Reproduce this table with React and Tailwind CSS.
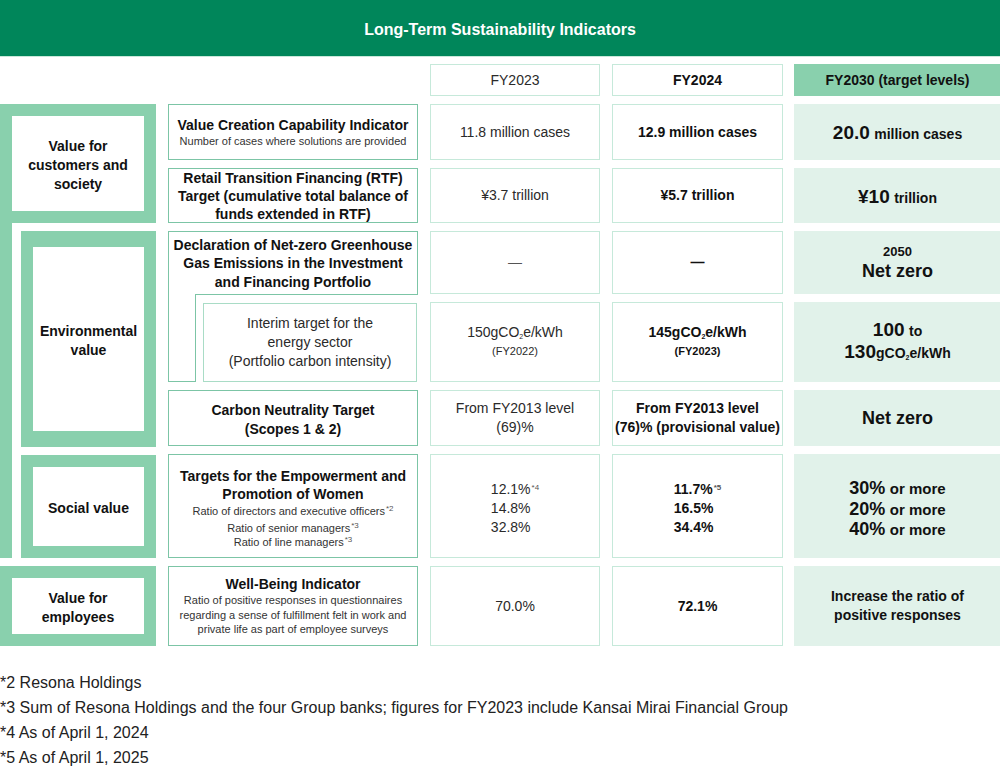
import React from "react";

const Cell = ({ children, bold }) => (
    <div className={"flex flex-col items-center justify-center border border-[#c6e9da] bg-white text-center text-[14px] leading-[19px] " + (bold ? "font-bold text-[#111]" : "text-[#2a2a2a]")}>
        {children}
    </div>
);

const Goal = ({ children }) => (
    <div className="flex flex-col items-center justify-center bg-[#e1f2ea] text-center font-bold text-[#111]">
        {children}
    </div>
);

const Ind = ({ children, className = "" }) => (
    <div className={"flex flex-col items-center justify-center border border-[#7cc5a6] bg-white text-center text-[#111] " + className}>
        {children}
    </div>
);

const Label = ({ children }) => (
    <div className="flex h-full w-full items-center justify-center bg-white pt-1 text-center text-[14px] font-bold leading-[19px] text-[#111]">
        {children}
    </div>
);

const Sup = ({ children }) => <sup className="ml-px text-[8px] text-[#555]">{children}</sup>;

const Co2 = () => <>gCO<sub className="text-[7px]">2</sub>e/kWh</>;

// one "30% or more" line in the target column
const Pct = ({ v }) => (
    <div className="h-[20.5px] leading-[20.5px]">
        <span className="text-[18px] leading-[20.5px]">{v}</span> <span className="text-[15px] leading-[20.5px]">or more</span>
    </div>
);

const App = () => {
    return (
        <div className="w-[1000px] bg-white font-['Liberation_Sans',Arial,sans-serif]">
            <div className="flex h-[57px] items-center justify-center border-b border-[#c9e8da] bg-[#00865a] pt-[3px] text-[16px] font-bold text-white">
                Long-Term Sustainability Indicators
            </div>

            <div className="mt-[7px] grid grid-cols-[156px_250px_170px_171px_206px] grid-rows-[32px_56px_55px_63px_80px_56px_104px_80px] gap-x-3 gap-y-2">
                {/* header row */}
                <div className="col-start-3 row-start-1 flex items-center justify-center border border-[#c6e9da] text-[14px] text-[#2a2a2a]">FY2023</div>
                <div className="col-start-4 row-start-1 flex items-center justify-center border border-[#c6e9da] text-[14px] font-bold text-[#111]">FY2024</div>
                <div className="col-start-5 row-start-1 -ml-px flex items-center justify-center bg-[#89d0ad] text-[14px] font-bold text-[#111]">FY2030 (target levels)</div>

                {/* left labels */}
                <div className="col-start-1 row-start-2 row-span-6 flex flex-col">
                    <div className="h-[119px] bg-[#89d0ad] p-3">
                        <Label>Value for<br />customers and<br />society</Label>
                    </div>
                    <div className="flex flex-1">
                        <div className="w-3 bg-[#89d0ad]" />
                        <div className="flex flex-1 flex-col gap-2 pl-[9px] pt-2">
                            <div className="h-[216px] bg-[#89d0ad] px-3 py-4">
                                <Label>Environmental<br />value</Label>
                            </div>
                            <div className="flex-1 bg-[#89d0ad] p-3">
                                <Label>Social value</Label>
                            </div>
                        </div>
                    </div>
                </div>
                <div className="col-start-1 row-start-8 bg-[#89d0ad] p-3">
                    <Label>Value for<br />employees</Label>
                </div>

                {/* indicators */}
                <Ind className="col-start-2 row-start-2">
                    <div className="text-[14px] font-bold leading-[18px]">Value Creation Capability Indicator</div>
                    <div className="text-[11px] leading-[15px] text-[#333]">Number of cases where solutions are provided</div>
                </Ind>
                <Ind className="col-start-2 row-start-3 text-[14px] font-bold leading-[18px]">
                    Retail Transition Financing (RTF)<br />Target (cumulative total balance of<br />funds extended in RTF)
                </Ind>
                <div className="col-start-2 row-start-4 row-span-2 flex flex-col">
                    <div className="flex h-[63px] items-center justify-center border-x border-t border-[#7cc5a6] pt-px text-center text-[14px] font-bold leading-[18.5px] text-[#111]">
                        Declaration of Net-zero Greenhouse<br />Gas Emissions in the Investment<br />and Financing Portfolio
                    </div>
                    <div className="flex flex-1">
                        <div className="w-[28px] border-x border-b border-[#7cc5a6]" />
                        <div className="flex flex-1 border-t border-[#7cc5a6] pl-[7px] pr-px pt-2">
                            <div className="flex flex-1 items-center justify-center border border-[#a9dcc6] text-center text-[14px] leading-[19px] text-[#2a2a2a]">
                                Interim target for the<br />energy sector<br />(Portfolio carbon intensity)
                            </div>
                        </div>
                    </div>
                </div>
                <Ind className="col-start-2 row-start-6 pt-1 text-[14px] font-bold leading-[19px]">
                    Carbon Neutrality Target<br />(Scopes 1 &amp; 2)
                </Ind>
                <Ind className="col-start-2 row-start-7 pt-1">
                    <div className="text-[14px] font-bold leading-[18.5px]">Targets for the Empowerment and<br />Promotion of Women</div>
                    <div className="text-[11px] leading-[15px] text-[#333]">Ratio of directors and executive officers<Sup>*2</Sup></div>
                    <div className="mt-[2px] text-[11px] leading-[14.5px] text-[#333]">Ratio of senior managers<Sup>*3</Sup><br />Ratio of line managers<Sup>*3</Sup></div>
                </Ind>
                <Ind className="col-start-2 row-start-8">
                    <div className="text-[14px] font-bold leading-[18px]">Well-Being Indicator</div>
                    <div className="text-[11px] leading-[14.5px] text-[#333]">Ratio of positive responses in questionnaires<br />regarding a sense of fulfillment felt in work and<br />private life as part of employee surveys</div>
                </Ind>

                {/* FY2023 */}
                <div className="col-start-3 row-start-2 grid"><Cell>11.8 million cases</Cell></div>
                <div className="col-start-3 row-start-3 grid"><Cell>¥3.7 trillion</Cell></div>
                <div className="col-start-3 row-start-4 grid"><Cell><span className="text-[#555]">—</span></Cell></div>
                <div className="col-start-3 row-start-5 grid"><Cell><div>150<Co2 /></div><div className="text-[11px] leading-[19px]">(FY2022)</div></Cell></div>
                <div className="col-start-3 row-start-6 grid"><Cell>From FY2013 level<br />(69)%</Cell></div>
                <div className="col-start-3 row-start-7 grid"><Cell><div className="pt-1 text-left">12.1%<Sup>*4</Sup><br />14.8%<br />32.8%</div></Cell></div>
                <div className="col-start-3 row-start-8 grid"><Cell>70.0%</Cell></div>

                {/* FY2024 */}
                <div className="col-start-4 row-start-2 grid"><Cell bold>12.9 million cases</Cell></div>
                <div className="col-start-4 row-start-3 grid"><Cell bold>¥5.7 trillion</Cell></div>
                <div className="col-start-4 row-start-4 grid"><Cell bold>—</Cell></div>
                <div className="col-start-4 row-start-5 grid"><Cell bold><div>145<Co2 /></div><div className="text-[11px] leading-[19px]">(FY2023)</div></Cell></div>
                <div className="col-start-4 row-start-6 grid"><Cell bold>From FY2013 level<br />(76)% (provisional value)</Cell></div>
                <div className="col-start-4 row-start-7 grid"><Cell bold><div className="pt-1 text-left">11.7%<Sup>*5</Sup><br />16.5%<br />34.4%</div></Cell></div>
                <div className="col-start-4 row-start-8 grid"><Cell bold>72.1%</Cell></div>

                {/* FY2030 */}
                <div className="col-start-5 row-start-2 -ml-px grid"><Goal><div className="pt-[3px]"><span className="text-[19px]">20.0</span> <span className="text-[14px]">million cases</span></div></Goal></div>
                <div className="col-start-5 row-start-3 -ml-px grid"><Goal><div className="pt-[3px]"><span className="text-[19px]">¥10</span> <span className="text-[14px]">trillion</span></div></Goal></div>
                <div className="col-start-5 row-start-4 -ml-px grid"><Goal><div className="text-[13px] leading-[17px]">2050</div><div className="text-[18px] leading-[22px]">Net zero</div></Goal></div>
                <div className="col-start-5 row-start-5 -ml-px grid"><Goal><div className="leading-[20px]"><span className="text-[19px]">100</span> <span className="text-[14px]">to</span></div><div className="leading-[22px]"><span className="text-[19px]">130</span><span className="text-[14px]"><Co2 /></span></div></Goal></div>
                <div className="col-start-5 row-start-6 -ml-px grid"><Goal><div className="text-[18px]">Net zero</div></Goal></div>
                <div className="col-start-5 row-start-7 -ml-px grid"><Goal><div className="pt-[6px] text-left"><Pct v="30%" /><Pct v="20%" /><Pct v="40%" /></div></Goal></div>
                <div className="col-start-5 row-start-8 -ml-px grid"><Goal><div className="text-[14px] leading-[19px]">Increase the ratio of<br />positive responses</div></Goal></div>
            </div>

            <div className="mt-6 text-[16px] leading-[25px] text-[#222]">
                <p>*2 Resona Holdings</p>
                <p>*3 Sum of Resona Holdings and the four Group banks; figures for FY2023 include Kansai Mirai Financial Group</p>
                <p>*4 As of April 1, 2024</p>
                <p>*5 As of April 1, 2025</p>
            </div>
        </div>
    );
};

export default App;
